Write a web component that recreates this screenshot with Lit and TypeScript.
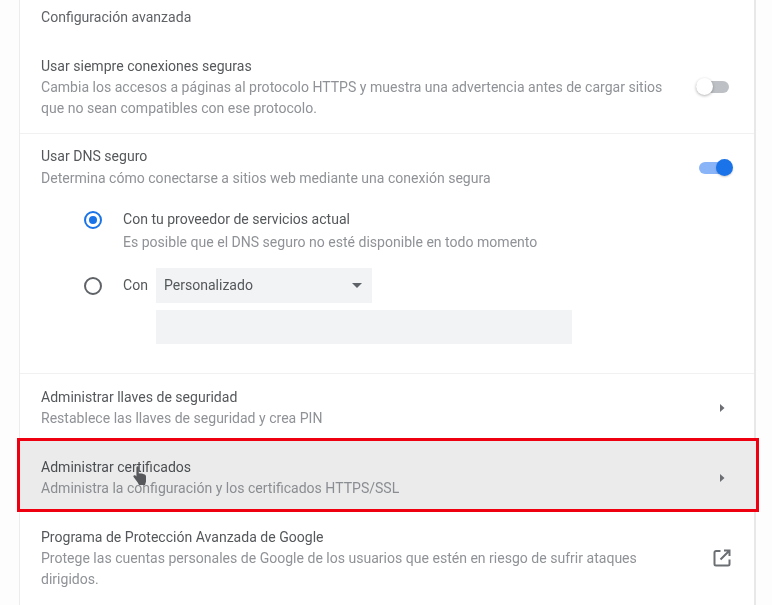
import { LitElement, html, css, svg } from "lit";
import { customElement } from "lit/decorators.js";

const caret = svg`<svg class="caret" width="8" height="10" viewBox="0 0 8 10"><path d="M2 1l4.500 4L2 9z" fill="#6b6e72"/></svg>`;

@customElement("app-root")
export class AppRoot extends LitElement {
  static styles = css`
    :host { display: block; width: 772px; height: 605px; overflow: hidden; background: #fdfdfd;
      font-family: Roboto, "Liberation Sans", sans-serif; font-size: 14.05px; line-height: 21px; color: #5f6368; }
    .card { box-sizing: border-box; width: 737px; height: 605px; margin-left: 19px; background: #fff;
      border-left: 1px solid #ececec; border-right: 2px solid #e8e8e8; display: flex; flex-direction: column; filter: blur(0.5px); }
    .head { height: 36px; box-sizing: border-box; padding: 7px 21px 0; color: #5f6266; }
    .row { display: flex; align-items: center; justify-content: space-between; box-sizing: border-box; padding: 0 21px; }
    .text { width: 630px; }
    .t { color: #55585b; }
    .d { color: #8f9296; }
    .r1 { height: 98px; padding-top: 5px; border-bottom: 1px solid #f1f1f1; }
    .r2 { height: 56px; padding-top: 11px; }
    .r2 .d { margin-top: 1px; }
    .dns { height: 184px; box-sizing: border-box; border-bottom: 1px solid #f1f1f1; padding: 0 0 0 64px; display: flex; flex-direction: column; }
    .opt { display: flex; gap: 21px; align-items: center; }
    .o1 { margin-top: 19px; align-items: flex-start; }
    .o1 .radio { margin-top: 2px; }
    .o1 .d { margin-top: 2px; }
    .o2 { margin-top: 15px; }
    .radio { width: 18px; height: 18px; box-sizing: border-box; border-radius: 50%; border: 2px solid #5f6368; flex: none; display: flex; align-items: center; justify-content: center; }
    .radio.on { border-color: #1a73e8; }
    .radio.on::after { content: ""; width: 8px; height: 8px; border-radius: 50%; background: #1a73e8; }
    .con { display: flex; align-items: center; gap: 8px; }
    .select { width: 216px; height: 35px; box-sizing: border-box; background: #f1f3f4; padding: 0 8px; display: flex; align-items: center; justify-content: space-between; color: #55585b; }
    .arrow { width: 0; height: 0; border: 5px solid transparent; border-top-color: #5f6368; border-bottom: 0; margin-right: 2px; }
    .input { width: 416px; height: 34px; background: #f1f3f4; margin: 7px 0 0 72px; }
    .toggle { width: 34px; height: 18px; position: relative; flex: none; }
    .track { position: absolute; left: -3px; right: 4px; top: 3px; height: 12px; border-radius: 6px; background: #bdc1c6; }
    .knob { position: absolute; top: 0; left: -3px; width: 17px; height: 17px; border-radius: 50%; background: #fff; box-shadow: 0 1px 3px rgba(0,0,0,.3); }
    .toggle.on .track { left: 0; right: 8px; background: #8ab4f8; }
    .toggle.on .knob { left: auto; right: 0; width: 17px; height: 17px; background: #1a73e8; box-shadow: 0 1px 2px rgba(0,0,0,.2); }
    .nav { height: 64px; padding-top: 3px; }
    .hl { height: 74px; background: #ebebeb; border: 3px solid #ee0011; position: relative; margin: 0 -5px 0 -3px; padding: 5px 30px 0 21px; }
    .hl .t { color: #4b4e51; }
    .hl .d { color: #8a8d91; }
    .caret { flex: none; margin-right: 7px; }
    .hl .caret { margin-right: 0; }
    .hand { position: absolute; left: 112px; top: 24px; }
    .last { height: 93px; align-items: flex-start; padding-top: 15px; }
    .ext { margin: 21px 1px 0 0; flex: none; }
  `;

  render() {
    return html`<div class="card">
      <div class="head">Configuración avanzada</div>
      <div class="row r1">
        <div class="text"><div class="t">Usar siempre conexiones seguras</div>
          <div class="d">Cambia los accesos a páginas al protocolo HTTPS y muestra una advertencia antes de cargar sitios que no sean compatibles con ese protocolo.</div></div>
        <div class="toggle"><div class="track"></div><div class="knob"></div></div>
      </div>
      <div class="row r2">
        <div class="text"><div class="t">Usar DNS seguro</div>
          <div class="d">Determina cómo conectarse a sitios web mediante una conexión segura</div></div>
        <div class="toggle on"><div class="track"></div><div class="knob"></div></div>
      </div>
      <div class="dns">
        <div class="opt o1"><div class="radio on"></div><div><div class="t">Con tu proveedor de servicios actual</div>
          <div class="d">Es posible que el DNS seguro no esté disponible en todo momento</div></div></div>
        <div class="opt o2"><div class="radio"></div><div class="con"><span class="t">Con</span>
          <div class="select"><span>Personalizado</span><span class="arrow"></span></div></div></div>
        <div class="input"></div>
      </div>
      <div class="row nav"><div class="text"><div class="t">Administrar llaves de seguridad</div>
        <div class="d">Restablece las llaves de seguridad y crea PIN</div></div>${caret}</div>
      <div class="row hl"><div class="text"><div class="t">Administrar certificados</div>
        <div class="d">Administra la configuración y los certificados HTTPS/SSL</div></div>${caret}
        <svg class="hand" width="20" height="22" viewBox="0 0 20 22"><path d="M5 1.500c.9-.6 1.800 0 1.800 1v6l1-.3 1 .2 1.200.2 1.200.4 1.600.6c1 .5 1.200 1.400 1.200 2.400v4.400l-1 3.600H7l-1.300-2.600L1.600 12c-.5-.7-.1-1.600.7-1.700.8-.1 1.600.5 2.100 1.100V2.500c0-.4.2-.8.600-1z" fill="#56585c"/></svg>
      </div>
      <div class="row last"><div class="text"><div class="t">Programa de Protección Avanzada de Google</div>
        <div class="d">Protege las cuentas personales de Google de los usuarios que estén en riesgo de sufrir ataques dirigidos.</div></div>
        <svg class="ext" width="20" height="20" viewBox="0 0 20 20" fill="none" stroke="#6b6e72" stroke-width="2"><path d="M8.500 3H4a1.500 1.500 0 0 0-1.500 1.500v11.500A1.500 1.500 0 0 0 4 17.500h12a1.500 1.500 0 0 0 1.500-1.500v-4.500M12 2.500h5.500V8M17 3l-8.500 8.500"/></svg>
      </div>
    </div>`;
  }
}
